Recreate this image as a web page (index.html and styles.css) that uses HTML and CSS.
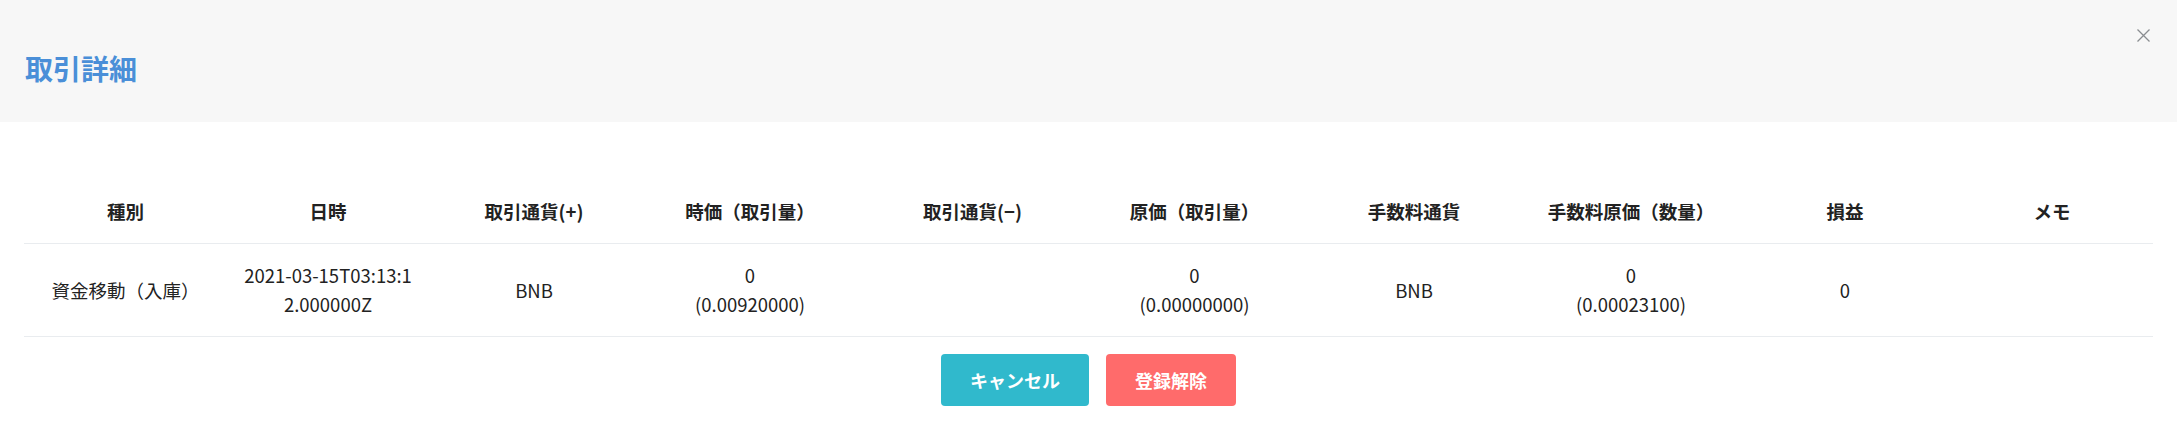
FILE: index.html
```html
<!DOCTYPE html>
<html lang="ja">
<head>
    <meta charset="UTF-8">
    <meta name="viewport" content="width=device-width, initial-scale=1.0">
    <title>取引詳細</title>
    <link rel="stylesheet" href="styles.css">
</head>
<body>

    <div class="modal">
        <div class="modal-header">
            <h2 class="modal-title">取引詳細</h2>
            <button class="close-btn" aria-label="閉じる">
                <svg width="13" height="13" viewBox="0 0 13 13">
                    <path d="M0.5 0.5 L12.5 12.5 M12.5 0.5 L0.5 12.5" stroke="#8a8d91" stroke-width="1.3" fill="none"/>
                </svg>
            </button>
        </div>

        <div class="modal-body">
            <table class="detail-table">
                <colgroup>
                    <col class="c-type">
                    <col class="c-date">
                    <col class="c-plus">
                    <col class="c-price">
                    <col class="c-minus">
                    <col class="c-cost">
                    <col class="c-fee">
                    <col class="c-feecost">
                    <col class="c-pl">
                    <col class="c-memo">
                </colgroup>
                <thead>
                    <tr>
                        <th>種別</th>
                        <th>日時</th>
                        <th>取引通貨(+)</th>
                        <th>時価（取引量）</th>
                        <th>取引通貨(−)</th>
                        <th>原価（取引量）</th>
                        <th>手数料通貨</th>
                        <th>手数料原価（数量）</th>
                        <th>損益</th>
                        <th>メモ</th>
                    </tr>
                </thead>
                <tbody>
                    <tr>
                        <td>資金移動（入庫）</td>
                        <td class="date-cell">2021-03-15T03:13:12.000000Z</td>
                        <td>BNB</td>
                        <td>0<br>(0.00920000)</td>
                        <td></td>
                        <td>0<br>(0.00000000)</td>
                        <td>BNB</td>
                        <td>0<br>(0.00023100)</td>
                        <td>0</td>
                        <td></td>
                    </tr>
                </tbody>
            </table>

            <div class="actions">
                <button class="btn btn-cancel">キャンセル</button>
                <button class="btn btn-delete">登録解除</button>
            </div>
        </div>
    </div>

</body>
</html>
```

FILE: styles.css
```css
body {
    margin: 0;
    background: #fff;
    font-family: "Noto Sans CJK JP", "Noto Sans", sans-serif;
    color: #212529;
}
.modal {
    width: 100%;
}
.modal-header {
    position: relative;
    background: #f7f7f7;
    height: 122px;
    padding: 48px 25px 0;
    box-sizing: border-box;
}
.modal-title {
    margin: 0;
    font-size: 28px;
    line-height: 40px;
    font-weight: 700;
    color: #4a8fd8;
}
.close-btn {
    position: absolute;
    top: 29px;
    right: 27px;
    padding: 0;
    border: none;
    background: none;
    cursor: pointer;
    line-height: 0;
}
.modal-body {
    padding: 58px 24px 0;
}
.detail-table {
    width: 100%;
    table-layout: fixed;
    border-collapse: collapse;
    font-size: 18.5px;
}
.c-type { width: 203px; }
.c-date { width: 202px; }
.c-plus { width: 210px; }
.c-price { width: 222px; }
.c-minus { width: 223px; }
.c-cost { width: 221px; }
.c-fee { width: 218px; }
.c-feecost { width: 216px; }
.c-pl { width: 212px; }
.c-memo { width: 202px; }
.detail-table th,
.detail-table td {
    padding: 17px 16px;
    line-height: 29px;
    text-align: center;
    vertical-align: middle;
    border-bottom: 1px solid #e9ecef;
}
.detail-table th {
    font-weight: 700;
    color: #222;
}
.detail-table td {
    font-weight: 400;
    color: #222;
}
.date-cell { word-break: break-all; }
.actions {
    display: flex;
    justify-content: center;
    gap: 17px;
    margin-top: 17px;
}
.btn {
    height: 52px;
    padding: 0 29px;
    border: none;
    border-radius: 4px;
    font-family: inherit;
    font-size: 18px;
    font-weight: 700;
    color: #fff;
    cursor: pointer;
}
.btn-cancel { background: #30b9cc; }
.btn-delete { background: #ff6b6b; }
```
